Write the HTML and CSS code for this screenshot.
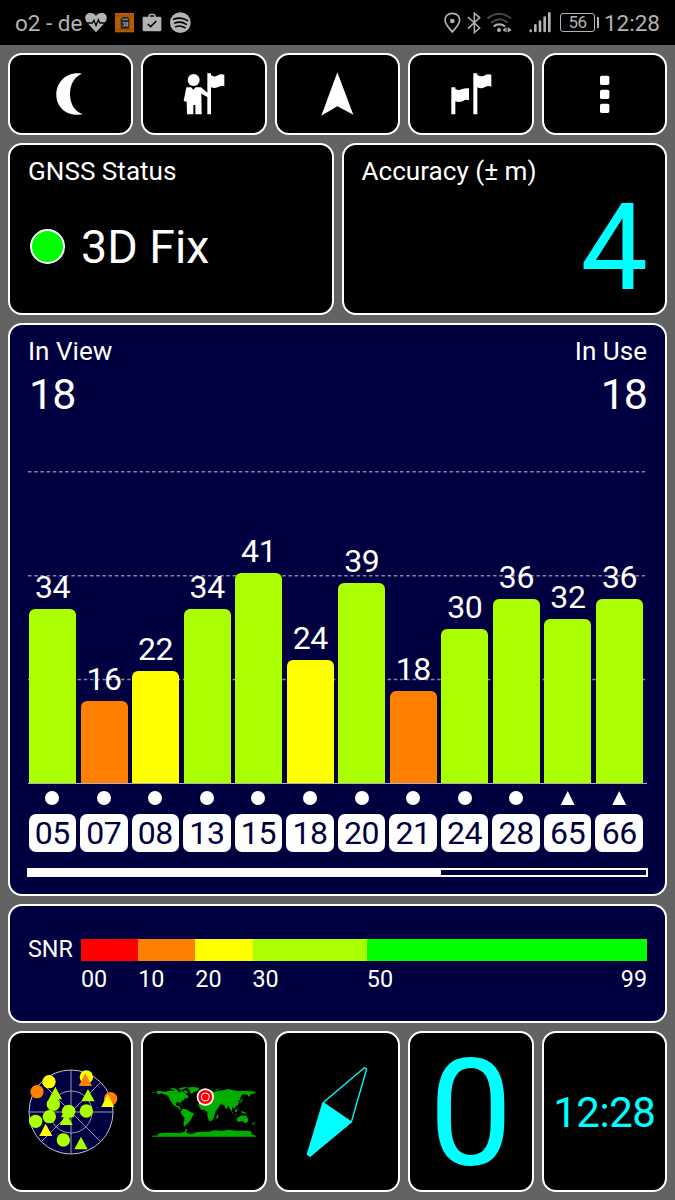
FILE: index.html
```html
<!DOCTYPE html>
<html lang="en">
<head>
    <meta charset="UTF-8">
    <meta name="viewport" content="width=device-width, initial-scale=1.0">
    <title>GNSS Status</title>
    <link rel="stylesheet" href="styles.css">
</head>
<body>
    <header class="statusbar">
        <span class="carrier">o2 - de</span>
        <div class="notifications">
            <svg width="22" height="45" viewBox="257 0 66 135">
                <path fill="#b3b3b3" d="M290 97 L262 67 C252 50 261 39 273 39 C281 39 287 43 290 48 C293 43 299 39 307 39 C319 39 328 50 318 67 Z"/>
                <path fill="none" stroke="#000" stroke-width="4" d="M257 69 H279 L284 61 L290 77 L297 59 L302 69 H323"/>
            </svg>
            <svg width="19" height="45" viewBox="345 0 57 135">
                <rect x="345" y="39" width="57" height="58" fill="#b85c00"/>
                <path stroke="#8a4300" stroke-width="2" d="M345 48 H402 M345 89 H402"/>
                <path fill="#252a30" d="M362 58 L368 51 H383 L388 56 V86 H362 Z"/>
                <path fill="none" stroke="#b3b3b3" stroke-width="2.5" d="M367 58 H384 M368 68 H374 V78 H368 M378 68 H383 V78 H378 Z"/>
            </svg>
            <svg width="20" height="45" viewBox="429 0 60 135">
                <path fill="#b3b3b3" fill-rule="evenodd" d="M434 50 H448 V46 L452 41 H466 L470 46 V50 H483 Q487 50 487 54 V89 Q487 94 482 94 H436 Q431 94 431 89 V54 Q431 50 434 50 Z M453 50 H465 V46 H453 Z"/>
                <path fill="none" stroke="#000" stroke-width="5" d="M446 72 L455 80 L472 63"/>
            </svg>
            <svg width="21" height="45" viewBox="512 0 63 135">
                <circle cx="543" cy="68" r="31" fill="#b3b3b3"/>
                <path fill="none" stroke="#000" stroke-width="5" stroke-linecap="round" d="M523 58 Q545 49 565 62 M526 69 Q545 62 561 73 M529 80 Q544 75 557 83"/>
            </svg>
        </div>
        <div class="system">
            <svg width="17" height="45" viewBox="326 0 51 135">
                <path fill="none" stroke="#b3b3b3" stroke-width="5" d="M351 96 C340 82 329 73 329 61 C329 48 339 40 351 40 C363 40 373 48 373 61 C373 73 362 82 351 96 Z"/>
                <circle cx="351" cy="63" r="7" fill="#b3b3b3"/>
            </svg>
            <svg width="14" height="45" viewBox="396 0 42 135">
                <path fill="none" stroke="#b3b3b3" stroke-width="4.5" d="M399 51 L434 84 L418 98 V40 L434 53 L399 86"/>
            </svg>
            <svg class="wifi" width="25" height="45" viewBox="455 0 75 135">
                <path fill="none" stroke="#484848" stroke-width="6" d="M457 55 Q492 28 527 55 M467 68 Q492 48 517 68"/>
                <path fill="none" stroke="#b3b3b3" stroke-width="6" d="M475 79 Q492 66 509 79"/>
                <circle cx="491" cy="90" r="6" fill="#b3b3b3"/>
                <path fill="#b3b3b3" d="M502 90 L511 82 V97 Z M513 83 H516 V97 H513 Z M518 82 L529 90 L518 97 Z"/>
            </svg>
            <svg class="signal" width="22" height="45" viewBox="580 0 66 135">
                <path stroke="#b3b3b3" stroke-width="8" stroke-linecap="round" d="M585 92 V93 M599 76 V93 M613 65 V93 M627 53 V93 M641 40 V93"/>
            </svg>
            <div class="battery">56</div>
            <span class="clock">12:28</span>
        </div>
    </header>

    <main class="dashboard">
        <div class="row five">
            <button class="card">
                <svg width="47" height="47" viewBox="141 212 141 141">
                    <path fill="#fff" d="M246 220 C200 212 169 245 169 283 C169 325 206 350 249 342 C224 334 210 311 210 281 C210 251 224 229 246 220 Z"/>
                </svg>
            </button>
            <button class="card">
                <svg width="47" height="47" viewBox="542 212 141 141" fill="#fff">
                    <circle cx="580" cy="239" r="18"/>
                    <path d="M558 261 H572 L579 268 L586 261 H602 L621 277 V219 H632 V225 Q642 231 650 226 Q661 220 672 223 V258 Q662 255 653 260 Q643 266 632 261 V342 H621 V290 L603 280 L604 342 H585 V314 H579 V342 H560 L559 304 L550 302 Z"/>
                </svg>
            </button>
            <button class="card">
                <svg width="47" height="47" viewBox="942 212 141 141">
                    <path fill="#fff" d="M1012 216 L1060 343 L1012 318 L964 346 Z"/>
                </svg>
            </button>
            <button class="card">
                <svg width="47" height="47" viewBox="338 212 141 141" fill="#fff">
                    <path d="M351 261 H363 V266 Q373 272 382 267 Q393 262 404 264 V300 Q395 296 386 302 Q374 308 363 303 V342 H351 Z"/>
                    <path d="M417 219 H429 V224 Q440 231 449 226 Q460 220 471 223 V259 Q462 255 452 260 Q441 267 429 261 V342 H417 Z"/>
                </svg>
            </button>
            <button class="card">
                <svg width="47" height="47" viewBox="738 212 141 141" fill="#fff">
                    <rect x="795" y="226" width="28" height="28" rx="5"/>
                    <rect x="795" y="268" width="28" height="28" rx="5"/>
                    <rect x="795" y="310" width="28" height="28" rx="5"/>
                </svg>
            </button>
        </div>

        <div class="row two">
            <section class="card info">
                <h2>GNSS Status</h2>
                <div class="fix"><span class="led"></span>3D Fix</div>
            </section>
            <section class="card info">
                <h2>Accuracy (± m)</h2>
                <div class="accuracy">4</div>
            </section>
        </div>

        <section class="card satellites">
            <div class="counts">
                <div>
                    <h2>In View</h2>
                    <div class="count">18</div>
                </div>
                <div class="right">
                    <h2>In Use</h2>
                    <div class="count">18</div>
                </div>
            </div>
            <div class="plot">
                <svg class="grid" width="619" height="313" viewBox="0 0 619 313">
                    <path stroke="#8585a6" stroke-width="1.6" stroke-dasharray="3.5 2.7" d="M0 .8 H617 M0 104.8 H617 M0 208.5 H617"/>
                    <path stroke="#b0b0c4" d="M0 312.5 H619"/>
                </svg>
                <div class="bars">
                    <div class="bar"><span>34</span><i class="lime" style="height: 174px"></i></div>
                    <div class="bar"><span>16</span><i class="orange" style="height: 82px"></i></div>
                    <div class="bar"><span>22</span><i class="yellow" style="height: 112.5px"></i></div>
                    <div class="bar"><span>34</span><i class="lime" style="height: 174px"></i></div>
                    <div class="bar"><span>41</span><i class="lime" style="height: 210px"></i></div>
                    <div class="bar"><span>24</span><i class="yellow" style="height: 122.7px"></i></div>
                    <div class="bar"><span>39</span><i class="lime" style="height: 199.7px"></i></div>
                    <div class="bar"><span>18</span><i class="orange" style="height: 92px"></i></div>
                    <div class="bar"><span>30</span><i class="lime" style="height: 154px"></i></div>
                    <div class="bar"><span>36</span><i class="lime" style="height: 184.5px"></i></div>
                    <div class="bar"><span>32</span><i class="lime" style="height: 164px"></i></div>
                    <div class="bar"><span>36</span><i class="lime" style="height: 184.5px"></i></div>
                </div>
            </div>
            <div class="ids">
                <div class="id"><i class="dot"></i><span>05</span></div>
                <div class="id"><i class="dot"></i><span>07</span></div>
                <div class="id"><i class="dot"></i><span>08</span></div>
                <div class="id"><i class="dot"></i><span>13</span></div>
                <div class="id"><i class="dot"></i><span>15</span></div>
                <div class="id"><i class="dot"></i><span>18</span></div>
                <div class="id"><i class="dot"></i><span>20</span></div>
                <div class="id"><i class="dot"></i><span>21</span></div>
                <div class="id"><i class="dot"></i><span>24</span></div>
                <div class="id"><i class="dot"></i><span>28</span></div>
                <div class="id"><i class="dot triangle"></i><span>65</span></div>
                <div class="id"><i class="dot triangle"></i><span>66</span></div>
            </div>
            <div class="scroll"><div class="thumb" style="width: 66.8%"></div></div>
        </section>

        <section class="card snr">
            <span class="snr-title">SNR</span>
            <div class="scale">
                <div class="colors">
                    <i class="red"></i><i class="orange"></i><i class="yellow"></i><i class="lime"></i><i class="green"></i>
                </div>
                <div class="ticks">
                    <span>00</span><span>10</span><span>20</span><span>30</span><span class="ends"><b>50</b><b>99</b></span>
                </div>
            </div>
        </section>

        <div class="row five">
            <section class="card">
                <svg width="94" height="94" viewBox="71 119 282 282">
                    <circle cx="212" cy="260" r="126" fill="#000040" stroke="#c0c0cc" stroke-width="3"/>
                    <circle cx="212" cy="260" r="63" fill="none" stroke="#9a9aac" stroke-width="3"/>
                    <path stroke="#9a9aac" stroke-width="3" d="M86 260 H338 M212 134 V386 M123 171 L301 349 M301 171 L123 349"/>
                    <g fill="#aaff00">
                        <circle cx="159" cy="237" r="20"/>
                        <path d="M165 184 L185 222 H145 Z M263 191 L283 228 H243 Z"/>
                        <circle cx="258" cy="257" r="20"/>
                        <circle cx="147" cy="274" r="20"/>
                        <circle cx="106" cy="288" r="20"/>
                        <circle cx="189" cy="344" r="20"/>
                        <path d="M198 262 L217 299 H178 Z M201 240 L222 276 H182 Z M242 334 L262 372 H222 Z"/>
                        <circle cx="205" cy="258" r="20"/>
                    </g>
                    <g fill="#ffff00">
                        <circle cx="146" cy="169" r="20"/>
                        <circle cx="258" cy="155" r="20"/>
                        <path d="M136 295 L156 332 H117 Z"/>
                    </g>
                    <g fill="#ff8000">
                        <circle cx="110" cy="199" r="20"/>
                        <circle cx="331" cy="220" r="20"/>
                        <path d="M255 144 L275 182 H235 Z"/>
                    </g>
                    <path fill="#ffff00" d="M322 207 L342 245 H303 Z"/>
                </svg>
            </section>
            <section class="card">
                <svg width="106" height="54" viewBox="48 76 318 162">
                    <g fill="#00ae00">
                        <path d="M52 96 H58 V99 H52 Z M64 95 L74 94 L90 96 L103 93 L116 94 L118 88 L128 90 L129 97 L137 98 L139 92 L147 98 L155 105 L161 111 L158 116 L149 116 L147 121 L140 124 L136 132 L134 128 L126 128 L122 132 L125 139 L132 139 L135 145 L139 149 L135 150 L127 143 L117 138 L111 130 L105 122 L102 113 L96 107 L88 104 L78 101 L70 106 L72 101 L66 103 Z"/>
                        <path d="M102 87 L116 85 L124 88 L114 90 Z M128 88 L145 83 L158 82 L148 87 L139 91 Z M146 94 L151 91 L159 99 L152 102 Z M133 104 L140 108 L137 112 Z"/>
                        <path d="M155 84 L174 82 L191 84 L192 90 L186 94 L176 97 L171 103 L165 99 L164 91 Z"/>
                        <path d="M142 148 L151 148 L159 152 L166 157 L177 161 L173 170 L167 181 L162 188 L155 194 L148 201 L145 196 L148 181 L148 173 L140 165 L137 157 Z M134 134 L142 136 L140 138 Z"/>
                        <path d="M194 127 L199 119 L207 116 L215 123 L228 120 L237 126 L243 139 L251 143 L243 153 L239 164 L236 175 L229 184 L222 183 L217 168 L217 157 L208 150 L198 150 L193 142 L190 136 Z M248 164 L251 168 L246 179 L243 174 Z"/>
                        <path d="M199 106 L207 96 L220 92 L238 96 L251 93 L265 92 L280 88 L294 92 L313 95 L333 93 L361 96 L362 100 L347 104 L342 112 L337 105 L324 104 L318 109 L316 117 L310 125 L307 120 L312 128 L309 135 L301 141 L298 148 L291 141 L291 155 L284 148 L281 138 L276 144 L273 150 L268 137 L257 134 L251 142 L241 142 L234 128 L236 120 L221 119 L201 119 Z"/>
                        <path d="M197 101 L202 98 L204 106 L198 109 Z M239 90 L254 86 L243 93 Z M320 118 L324 116 L319 128 L313 131 Z M287 153 L296 161 L292 161 Z M300 151 L308 147 L305 158 L300 157 Z M310 144 L315 151 L311 149 Z M318 154 L336 160 L328 162 L318 158 Z M296 163 L307 164 L300 165 Z"/>
                        <path d="M307 174 L317 169 L322 166 L327 170 L332 166 L340 179 L338 187 L331 191 L322 184 L309 187 L305 181 Z M353 191 L361 187 L357 193 L350 196 Z"/>
                        <path d="M52 231 V228 L73 227 L66 223 L80 220 L107 219 L134 220 L149 216 L153 208 L158 209 L153 216 L158 221 L170 224 L183 218 L199 216 L219 216 L240 212 L260 213 L281 211 L307 213 L340 213 L352 217 L347 223 L362 228 V231 Z"/>
                    </g>
                    <circle cx="211" cy="112" r="26" fill="#fff"/>
                    <circle cx="211" cy="112" r="21" fill="#f00"/>
                    <circle cx="211" cy="112" r="12" fill="#f00" stroke="#fff" stroke-width="3"/>
                </svg>
            </section>
            <section class="card">
                <svg width="68" height="100" viewBox="100 110 204 300">
                    <path fill="none" stroke="#0ff" stroke-width="4" stroke-linejoin="round" d="M160 232 L284 127 L291 131 L245 290"/>
                    <path fill="#0ff" stroke="#0ff" stroke-width="4" stroke-linejoin="round" d="M160 232 L245 290 L121 393 L113 387 Z"/>
                </svg>
            </section>
            <section class="card speed">0</section>
            <section class="card time">12:28</section>
        </div>
    </main>
</body>
</html>
```
FILE: styles.css
```css
* {
    box-sizing: border-box;
}
body {
    margin: 0;
    height: 1200px;
    background: #636363;
    color: white;
    font-family: Roboto, "Liberation Sans", sans-serif;
    overflow: hidden;
}
svg {
    display: block;
    flex: none;
}
h2 {
    margin: 0;
    font-size: 26.1px;
    font-weight: normal;
    line-height: 30px;
}
.statusbar {
    height: 45px;
    padding: 0 15px;
    display: flex;
    align-items: center;
    background: black;
    color: #b3b3b3;
    font-size: 22.5px;
}
.carrier {
    width: 70px;
    padding-top: 1px;
    white-space: nowrap;
}
.notifications {
    display: flex;
    gap: 8px;
}
.system {
    display: flex;
    align-items: center;
    margin-left: auto;
}
.system svg {
    margin-right: 6px;
}
.system .wifi {
    margin-right: 17px;
}
.system .signal {
    margin-right: 9px;
}
.battery {
    width: 35px;
    height: 19px;
    border: 1px solid #b3b3b3;
    border-radius: 3px;
    font-size: 17px;
    line-height: 17px;
    letter-spacing: -0.7px;
    text-align: center;
    position: relative;
}
.battery::after {
    content: "";
    position: absolute;
    right: -5px;
    top: 3px;
    width: 2px;
    height: 11px;
    background: #b3b3b3;
}
.clock {
    margin-left: 9px;
    padding-top: 1px;
}
.dashboard {
    height: 1155px;
    padding: 8px;
    display: grid;
    grid-template-rows: 82px 172px 573px 119px 161px;
    gap: 8px;
}
.row {
    display: grid;
    gap: 8px;
}
.five {
    grid-template-columns: repeat(5, 1fr);
}
.two {
    grid-template-columns: 1fr 1fr;
}
.card {
    min-width: 0;
    padding: 0;
    display: flex;
    align-items: center;
    justify-content: center;
    background: black;
    border: 2px solid white;
    border-radius: 14px;
    white-space: nowrap;
}
.info {
    display: block;
    padding: 11px 18px 0;
}
.fix {
    height: 122px;
    display: flex;
    align-items: center;
    font-size: 46.5px;
}
.led {
    width: 35px;
    height: 35px;
    margin: 0 16px 2px 2px;
    background: #00ff00;
    border: 2px solid white;
    border-radius: 50%;
}
.accuracy {
    margin: 2px -1px 0 0;
    font-size: 120px;
    line-height: 120px;
    text-align: right;
    color: #00ffff;
}
.satellites {
    display: block;
    padding: 11px 18px 0;
    background: #000040;
}
.counts {
    display: flex;
    justify-content: space-between;
}
.right {
    text-align: right;
}
.count {
    margin-top: 6px;
    padding-left: 1px;
    font-size: 43px;
    line-height: 44px;
    letter-spacing: -1px;
}
.plot {
    height: 313px;
    margin-top: 55px;
    position: relative;
}
.grid {
    position: absolute;
    left: 0;
    top: 0;
}
.bars, .ids {
    display: grid;
    grid-template-columns: repeat(12, 1fr);
}
.bars {
    height: 312px;
    gap: 4.5px;
    padding: 0 4px 0 1px;
    position: relative;
}
.bar {
    display: flex;
    flex-direction: column;
    justify-content: flex-end;
    text-align: center;
    font-size: 32px;
    line-height: 32px;
    letter-spacing: -0.4px;
}
.bar span {
    margin-bottom: 6px;
}
.bar i {
    border-radius: 6px 6px 0 0;
}
.ids {
    gap: 4px;
    padding: 0 4px 0 0.5px;
    margin-top: 7px;
}
.id {
    display: flex;
    flex-direction: column;
    align-items: center;
}
.id span {
    width: 100%;
    height: 38px;
    margin-top: 9px;
    background: white;
    border-radius: 7px;
    color: #000040;
    font-size: 32px;
    line-height: 38px;
    letter-spacing: -0.4px;
    text-align: center;
}
.dot {
    width: 14px;
    height: 14px;
    background: white;
    border-radius: 50%;
}
.triangle {
    border-radius: 0;
    clip-path: polygon(50% 0, 100% 100%, 0 100%);
}
.scroll {
    width: 621px;
    height: 9px;
    margin: 16px 0 0 -1px;
    border: 2px solid white;
}
.thumb {
    height: 100%;
    background: white;
}
.snr {
    align-items: flex-start;
    justify-content: flex-start;
    padding: 33px 18px 0;
    background: #000040;
}
.snr-title {
    width: 53px;
    font-size: 23.3px;
    line-height: 20px;
}
.scale {
    flex: 1;
}
.colors, .ticks {
    display: grid;
    grid-template-columns: 10fr 10fr 10fr 20fr 49fr;
}
.colors {
    height: 22px;
}
.ticks {
    margin-top: 4px;
    font-size: 23.3px;
    line-height: 28px;
}
.ends {
    display: flex;
    justify-content: space-between;
}
.ends b {
    font-weight: normal;
}
.red {
    background: #ff0000;
}
.orange {
    background: #ff8000;
}
.yellow {
    background: #ffff00;
}
.lime {
    background: #aaff00;
}
.green {
    background: #00ff00;
}
.speed {
    padding-top: 5px;
    color: #00ffff;
    font-size: 149px;
    line-height: 150px;
}
.time {
    padding-top: 1px;
    color: #00ffff;
    font-size: 42px;
    letter-spacing: -0.5px;
}
```
